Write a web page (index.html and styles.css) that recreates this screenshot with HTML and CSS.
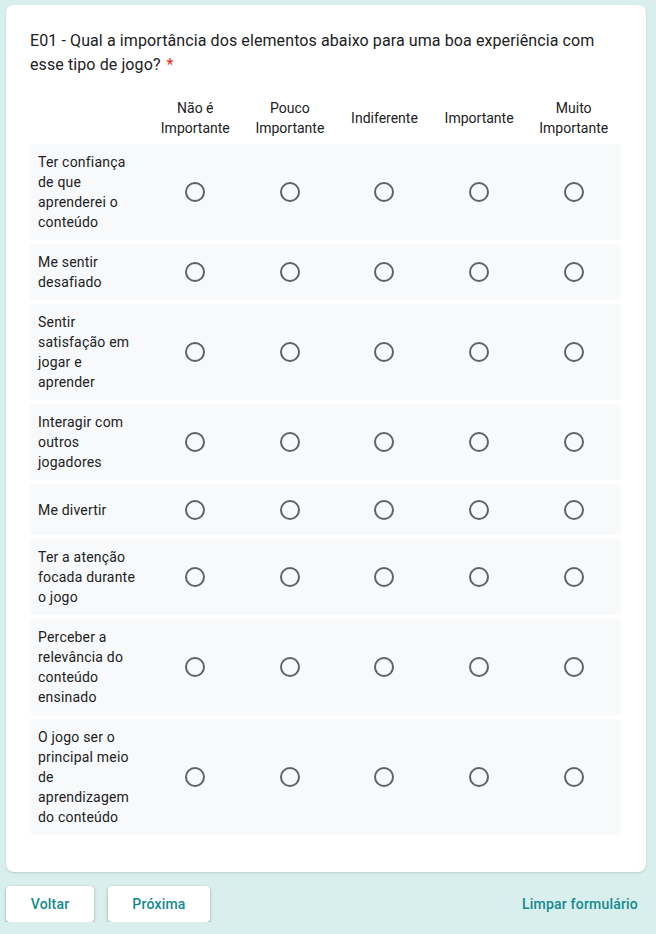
FILE: index.html
```html
<!DOCTYPE html>
<html lang="pt">
<head>
<meta charset="utf-8">
<link rel="stylesheet" href="styles.css">
</head>
<body>
<div class="page">
  <div class="card">
    <div class="title"><span class="q">E01 - Qual a importância dos elementos abaixo para uma boa experiência com esse tipo de jogo?</span><span class="req">*</span></div>
    <div class="grid-head">
      <div></div>
      <div class="col">Não é Importante</div>
      <div class="col">Pouco Importante</div>
      <div class="col">Indiferente</div>
      <div class="col">Importante</div>
      <div class="col">Muito Importante</div>
    </div>
    <div class="rows">
      <div class="row"><div class="label">Ter confiança de que aprenderei o conteúdo</div><div class="cell"><span class="radio"></span></div><div class="cell"><span class="radio"></span></div><div class="cell"><span class="radio"></span></div><div class="cell"><span class="radio"></span></div><div class="cell"><span class="radio"></span></div></div>
      <div class="row"><div class="label">Me sentir desafiado</div><div class="cell"><span class="radio"></span></div><div class="cell"><span class="radio"></span></div><div class="cell"><span class="radio"></span></div><div class="cell"><span class="radio"></span></div><div class="cell"><span class="radio"></span></div></div>
      <div class="row"><div class="label">Sentir satisfação em jogar e aprender</div><div class="cell"><span class="radio"></span></div><div class="cell"><span class="radio"></span></div><div class="cell"><span class="radio"></span></div><div class="cell"><span class="radio"></span></div><div class="cell"><span class="radio"></span></div></div>
      <div class="row"><div class="label">Interagir com outros jogadores</div><div class="cell"><span class="radio"></span></div><div class="cell"><span class="radio"></span></div><div class="cell"><span class="radio"></span></div><div class="cell"><span class="radio"></span></div><div class="cell"><span class="radio"></span></div></div>
      <div class="row"><div class="label">Me divertir</div><div class="cell"><span class="radio"></span></div><div class="cell"><span class="radio"></span></div><div class="cell"><span class="radio"></span></div><div class="cell"><span class="radio"></span></div><div class="cell"><span class="radio"></span></div></div>
      <div class="row"><div class="label">Ter a atenção focada durante o jogo</div><div class="cell"><span class="radio"></span></div><div class="cell"><span class="radio"></span></div><div class="cell"><span class="radio"></span></div><div class="cell"><span class="radio"></span></div><div class="cell"><span class="radio"></span></div></div>
      <div class="row"><div class="label">Perceber a relevância do conteúdo ensinado</div><div class="cell"><span class="radio"></span></div><div class="cell"><span class="radio"></span></div><div class="cell"><span class="radio"></span></div><div class="cell"><span class="radio"></span></div><div class="cell"><span class="radio"></span></div></div>
      <div class="row"><div class="label">O jogo ser o principal meio de aprendizagem do conteúdo</div><div class="cell"><span class="radio"></span></div><div class="cell"><span class="radio"></span></div><div class="cell"><span class="radio"></span></div><div class="cell"><span class="radio"></span></div><div class="cell"><span class="radio"></span></div></div>
    </div>
  </div>
  <div class="footer">
    <div class="nav">
      <button class="btn btn-back">Voltar</button>
      <button class="btn btn-next">Próxima</button>
    </div>
    <button class="clear">Limpar formulário</button>
  </div>
</div>
</body>
</html>
```

FILE: styles.css
```css
html, body {
  margin: 0;
  padding: 0;
  background: #d9efed;
}
body {
  font-family: Roboto, "Liberation Sans", Arial, sans-serif;
  color: #202124;
}
.page {
  width: 640px;
  padding: 5px 0 0 6px;
}
.card {
  background: #fff;
  border-radius: 8px;
  padding: 24px 24px 37px 24px;
  box-shadow: 0 1px 2px rgba(60, 64, 67, 0.2);
}
.title {
  font-size: 16px;
  line-height: 24px;
  letter-spacing: 0.1px;
  margin-bottom: 21px;
}
.req {
  color: #d93025;
  margin-left: 6px;
}
.grid-head {
  display: grid;
  grid-template-columns: 118px repeat(5, 1fr);
  align-items: center;
  margin-bottom: 6px;
  width: 591px;
}
.col {
  font-size: 14px;
  line-height: 20px;
  text-align: center;
  padding: 0 6px;
}
.rows {
  display: flex;
  flex-direction: column;
  gap: 4px;
  width: 591px;
}
.row {
  display: grid;
  grid-template-columns: 118px repeat(5, 1fr);
  align-items: center;
  background: #f8f9fa;
  border-radius: 4px;
  min-height: 51px;
}
.label {
  font-size: 14px;
  line-height: 20px;
  padding: 8px 8px 8px 8px;
  letter-spacing: 0.2px;
}
.cell {
  display: flex;
  justify-content: center;
  align-items: center;
}
.radio {
  width: 16px;
  height: 16px;
  border: 2px solid #5f6368;
  border-radius: 50%;
}
.footer {
  display: flex;
  justify-content: space-between;
  align-items: center;
  margin-top: 14px;
}
.nav {
  display: flex;
  gap: 14px;
}
.btn {
  height: 36px;
  padding: 0;
  border: none;
  background: #fff;
  border-radius: 4px;
  box-shadow: 0 1px 2px rgba(60, 64, 67, 0.3), 0 1px 3px 1px rgba(60, 64, 67, 0.12);
  font-family: Roboto, "Liberation Sans", Arial, sans-serif;
  font-size: 14px;
  font-weight: 500;
  color: #128a8e;
  letter-spacing: 0.2px;
}
.btn-back {
  width: 88px;
}
.btn-next {
  width: 102px;
}
.clear {
  height: 36px;
  padding: 0 8px;
  border: none;
  background: transparent;
  font-family: Roboto, "Liberation Sans", Arial, sans-serif;
  font-size: 14px;
  font-weight: 500;
  color: #128a8e;
  letter-spacing: 0.2px;
}
```
